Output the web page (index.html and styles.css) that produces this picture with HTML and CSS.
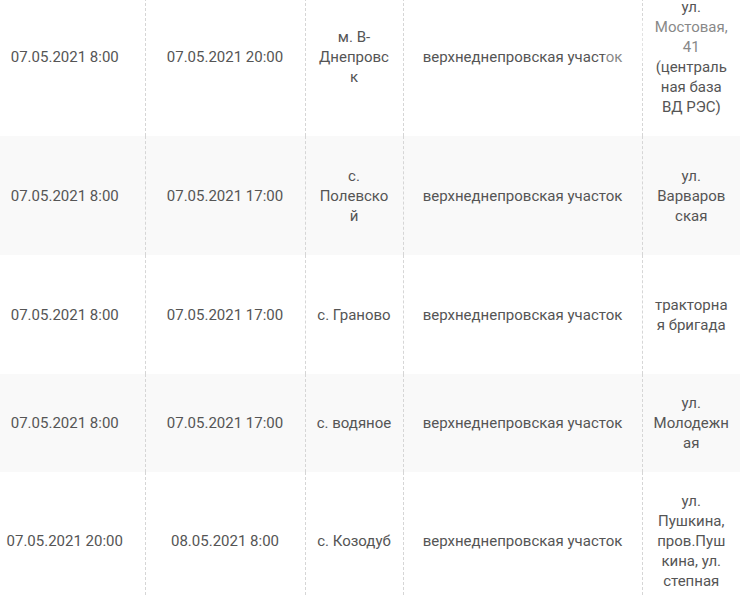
FILE: index.html
```html
<!DOCTYPE html>
<html lang="ru">
<head>
<meta charset="utf-8">
<title>Отключения</title>
<link rel="stylesheet" href="styles.css">
</head>
<body>
<div class="viewport">
  <table class="schedule">
    <colgroup>
      <col class="c-start">
      <col class="c-end">
      <col class="c-place">
      <col class="c-area">
      <col class="c-street">
    </colgroup>
    <tbody>
      <tr>
        <td>07.05.2021 8:00</td>
        <td>07.05.2021 20:00</td>
        <td>м. В-Днепровск</td>
        <td>верхнеднепровская участок</td>
        <td>ул. Мостовая, 41 (центральная база ВД РЭС)</td>
      </tr>
      <tr class="alt tall">
        <td>07.05.2021 8:00</td>
        <td>07.05.2021 17:00</td>
        <td>с. Полевской</td>
        <td>верхнеднепровская участок</td>
        <td>ул. Варваровская</td>
      </tr>
      <tr class="tall">
        <td>07.05.2021 8:00</td>
        <td>07.05.2021 17:00</td>
        <td>с. Граново</td>
        <td>верхнеднепровская участок</td>
        <td>тракторная бригада</td>
      </tr>
      <tr class="alt">
        <td>07.05.2021 8:00</td>
        <td>07.05.2021 17:00</td>
        <td>с. водяное</td>
        <td>верхнеднепровская участок</td>
        <td>ул. Молодежная</td>
      </tr>
      <tr>
        <td>07.05.2021 20:00</td>
        <td>08.05.2021 8:00</td>
        <td>с. Козодуб</td>
        <td>верхнеднепровская участок</td>
        <td>ул. Пушкина, пров.Пушкина, ул. степная</td>
      </tr>
    </tbody>
  </table>
  <div class="fade"></div>
</div>
</body>
</html>
```

FILE: styles.css
```css
html, body {
  margin: 0;
  padding: 0;
  background: #ffffff;
}

.viewport {
  position: relative;
  width: 740px;
  height: 595px;
  overflow: hidden;
}

.schedule {
  margin-left: -15px;
  margin-top: -22px;
  width: 755px;
  table-layout: fixed;
  border-collapse: collapse;
  font-family: Roboto, "Noto Sans", sans-serif;
  font-size: 15px;
  line-height: 20px;
  color: #555555;
}

.c-start { width: 160px; }
.c-end { width: 160px; }
.c-place { width: 98px; }
.c-area { width: 239px; }
.c-street { width: 98px; }

.schedule td {
  padding: 19px 11px;
  text-align: center;
  vertical-align: middle;
  overflow-wrap: break-word;
  word-wrap: break-word;
  border-left: 1px dashed #d6d6d6;
}

.schedule td:first-child {
  border-left: none;
}

.schedule tr.alt td {
  background: #f9f9f9;
}

.schedule tr.tall {
  height: 119px;
}

.fade {
  position: absolute;
  left: 604px;
  top: 20px;
  width: 136px;
  height: 43px;
  background: rgba(255, 255, 255, 0.3);
  pointer-events: none;
}
```
